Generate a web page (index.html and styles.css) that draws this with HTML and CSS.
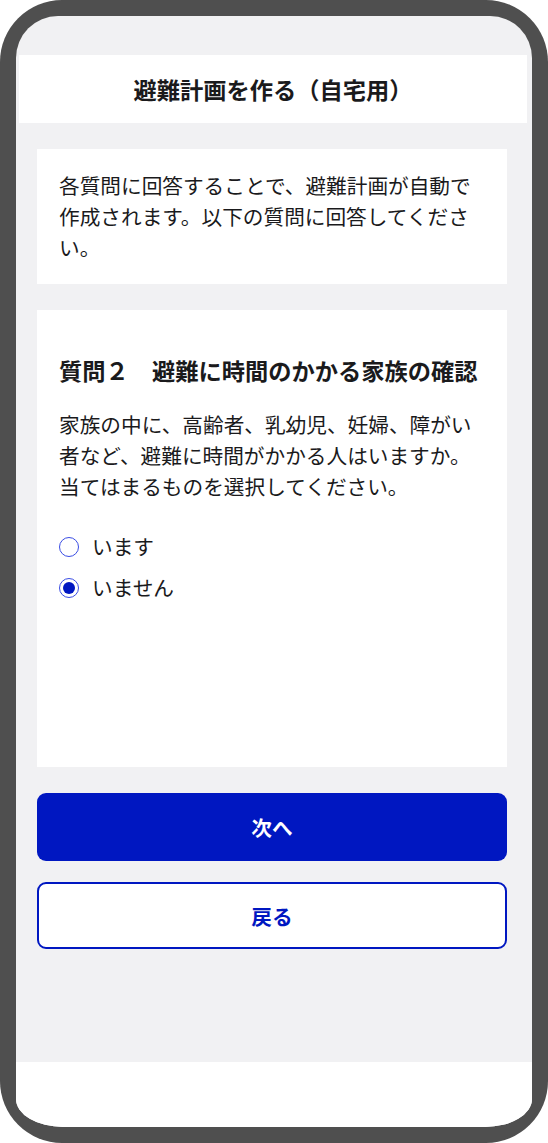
FILE: index.html
```html
<!DOCTYPE html>
<html lang="ja">
<head>
    <meta charset="UTF-8">
    <meta name="viewport" content="width=device-width, initial-scale=1.0">
    <title>避難計画を作る（自宅用）</title>
    <link rel="stylesheet" href="styles.css">
</head>
<body>

    <!-- Phone frame -->
    <div class="phone">
        <div class="screen">
            <div class="status-bar"></div>

            <header class="app-header">
                <h1>避難計画を作る（自宅用）</h1>
            </header>

            <main class="content">
                <section class="card intro">
                    <p>各質問に回答することで、避難計画が自動で作成されます。以下の質問に回答してください。</p>
                </section>

                <section class="card question">
                    <h2>質問２　避難に時間のかかる家族の確認</h2>
                    <p>家族の中に、高齢者、乳幼児、妊婦、障がい者など、避難に時間がかかる人はいますか。当てはまるものを選択してください。</p>

                    <div class="choices">
                        <label class="choice">
                            <input type="radio" name="q2" value="yes">
                            <span class="radio"></span>
                            <span>います</span>
                        </label>
                        <label class="choice">
                            <input type="radio" name="q2" value="no" checked>
                            <span class="radio"></span>
                            <span>いません</span>
                        </label>
                    </div>
                </section>

                <button class="button primary">次へ</button>
                <button class="button secondary">戻る</button>
            </main>

            <div class="home-bar"></div>
        </div>
    </div>

</body>
</html>
```

FILE: styles.css
```css
/* Global Styles */
* {
    box-sizing: border-box;
}

body {
    margin: 0;
    background-color: #ffffff;
    font-family: "Noto Sans CJK JP", "Noto Sans", sans-serif;
    color: #1a1a1c;
}

/* Phone frame */
.phone {
    width: 548px;
    height: 1143px;
    padding: 16px;
    background-color: #4f4f4f;
    border-radius: 62px;
}

.screen {
    display: flex;
    flex-direction: column;
    height: 100%;
    background-color: #f1f1f3;
    border-radius: 42px 42px 47px 47px / 42px 42px 28px 28px;
    overflow: hidden;
}

.status-bar {
    height: 39px;
    flex-shrink: 0;
}

/* Header */
.app-header {
    height: 68px;
    flex-shrink: 0;
    margin: 0 5px 0 3px;
    background-color: #ffffff;
    display: flex;
    align-items: center;
    justify-content: center;
}

.app-header h1 {
    margin: 0;
    font-size: 23.25px;
    font-weight: 700;
    line-height: 1.5;
}

/* Main content */
.content {
    flex: 1;
    display: flex;
    flex-direction: column;
    padding: 26px 25px 0 21px;
}

.card {
    background-color: #ffffff;
    padding: 21px 22px;
}

.card p {
    margin: 0;
    font-size: 20.67px;
    line-height: 31px;
}

.intro {
    height: 135px;
}

.question {
    height: 457px;
    margin-top: 26px;
    padding-top: 43px;
}

.question h2 {
    margin: 0 0 21px;
    font-size: 23.25px;
    font-weight: 700;
    line-height: 35px;
}

/* Radio choices */
.choices {
    display: flex;
    flex-direction: column;
    gap: 10px;
    margin-top: 29px;
}

.choice {
    display: flex;
    align-items: center;
    gap: 13px;
    font-size: 20.67px;
    line-height: 31px;
    cursor: pointer;
}

.choice input {
    display: none;
}

.radio {
    width: 20px;
    height: 20px;
    flex-shrink: 0;
    border: 1.5px solid #3a4de4;
    border-radius: 50%;
    display: flex;
    align-items: center;
    justify-content: center;
}

.choice input:checked + .radio::after {
    content: "";
    width: 12px;
    height: 12px;
    border-radius: 50%;
    background-color: #0017c1;
}

/* Button Styles */
.button {
    font-family: inherit;
    font-size: 20.67px;
    font-weight: 700;
    border-radius: 9px;
    cursor: pointer;
}

.primary {
    height: 68px;
    margin-top: 26px;
    color: #ffffff;
    background-color: #0017c1;
    border: none;
}

.secondary {
    height: 67px;
    margin-top: 21px;
    color: #0017c1;
    background-color: #ffffff;
    border: 2px solid #0017c1;
}

/* Bottom bar */
.home-bar {
    height: 65px;
    flex-shrink: 0;
    background-color: #ffffff;
}
```
